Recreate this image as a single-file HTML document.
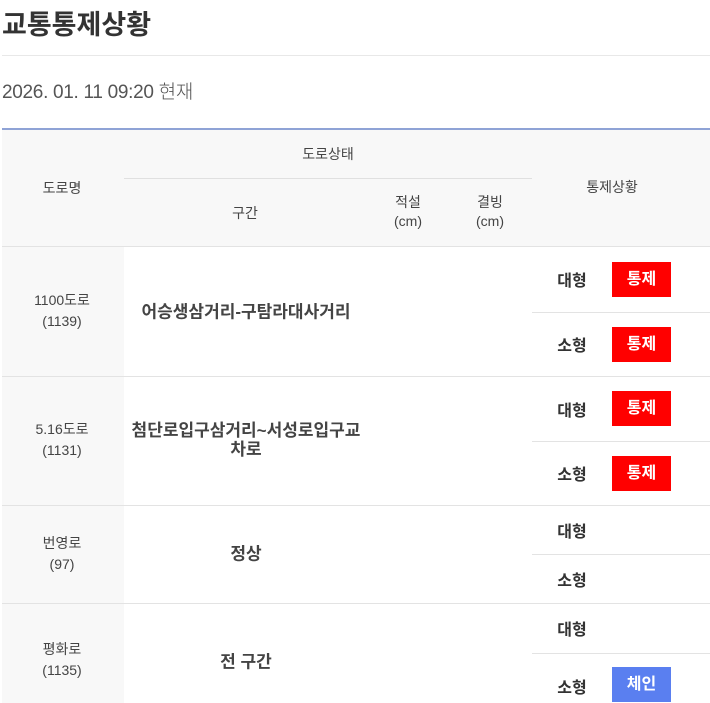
<!DOCTYPE html>
<html><head><meta charset="utf-8"><style>
*{margin:0;padding:0;box-sizing:border-box}
body{width:710px;height:703px;overflow:hidden;background:#fff;font-family:"Liberation Sans","Noto Sans CJK KR",sans-serif;color:#333;position:relative}
.a{position:absolute}
.c{position:absolute;transform:translate(-50%,-50%);text-align:center;white-space:nowrap}
.h{font-size:14px;color:#444}
.g{background:#f8f8f8}
.ln{position:absolute;height:1px;background:#e3e3e3}
.lab{font-size:16px;font-weight:bold;color:#333}
.b{position:absolute;width:59px;height:35px;color:#fff;font-weight:bold;font-size:16px;text-align:center;line-height:35px}
.r{background:#f00}.bl{background:#5a7ff0}
.rn{font-size:14px;color:#444;line-height:21px}
.sec{font-size:17px;font-weight:bold;color:#444;line-height:19px}
</style></head><body>
<div class="a" style="left:2px;top:3px;font-size:27px;font-weight:bold;color:#333">교통통제상황</div>
<div class="ln" style="left:2px;top:55px;width:708px;background:#e8e8e8"></div>
<div class="a" style="left:2px;top:77px;font-size:19px;color:#555;font-weight:300;letter-spacing:-0.3px">2026. 01. 11 09:20 현재</div>
<div class="a" style="left:2px;top:128px;width:708px;height:2px;background:#8fa3d6"></div>
<div class="a g" style="left:2px;top:130px;width:708px;height:116px"></div>
<div class="ln" style="left:124px;top:178px;width:408px;background:#e0e0e0"></div>
<div class="ln" style="left:2px;top:246px;width:708px"></div>
<div class="c h" style="left:328px;top:154px">도로상태</div>
<div class="c h" style="left:62px;top:188px">도로명</div>
<div class="c h" style="left:245px;top:213px">구간</div>
<div class="c h" style="left:408px;top:212px;line-height:19px">적설<br>(cm)</div>
<div class="c h" style="left:490px;top:212px;line-height:19px">결빙<br>(cm)</div>
<div class="c h" style="left:612px;top:187px">통제상황</div>

<div class="a g" style="left:2px;top:247px;width:122px;height:456px"></div>
<div class="ln" style="left:2px;top:376px;width:708px"></div>
<div class="ln" style="left:2px;top:505px;width:708px"></div>
<div class="ln" style="left:2px;top:603px;width:708px"></div>
<div class="ln" style="left:532px;top:312px;width:178px"></div>
<div class="ln" style="left:532px;top:441px;width:178px"></div>
<div class="ln" style="left:532px;top:554px;width:178px"></div>
<div class="ln" style="left:532px;top:653px;width:178px"></div>

<div class="c rn" style="left:62px;top:311px">1100도로<br>(1139)</div>
<div class="c sec" style="left:246px;top:312px">어승생삼거리-구탐라대사거리</div>
<div class="c rn" style="left:62px;top:440px">5.16도로<br>(1131)</div>
<div class="c sec" style="left:246px;top:440px">첨단로입구삼거리~서성로입구교<br>차로</div>
<div class="c rn" style="left:62px;top:554px">번영로<br>(97)</div>
<div class="c sec" style="left:246px;top:554px">정상</div>
<div class="c rn" style="left:62px;top:660px">평화로<br>(1135)</div>
<div class="c sec" style="left:246px;top:662px">전 구간</div>

<div class="c lab" style="left:572px;top:279px">대형</div>
<div class="b r" style="left:612px;top:262px">통제</div>
<div class="c lab" style="left:572px;top:344px">소형</div>
<div class="b r" style="left:612px;top:327px">통제</div>
<div class="c lab" style="left:572px;top:409px">대형</div>
<div class="b r" style="left:612px;top:391px">통제</div>
<div class="c lab" style="left:572px;top:473px">소형</div>
<div class="b r" style="left:612px;top:456px">통제</div>
<div class="c lab" style="left:572px;top:530px">대형</div>
<div class="c lab" style="left:572px;top:579px">소형</div>
<div class="c lab" style="left:572px;top:628px">대형</div>
<div class="c lab" style="left:572px;top:686px">소형</div>
<div class="b bl" style="left:612px;top:667px">체인</div>
</body></html>
